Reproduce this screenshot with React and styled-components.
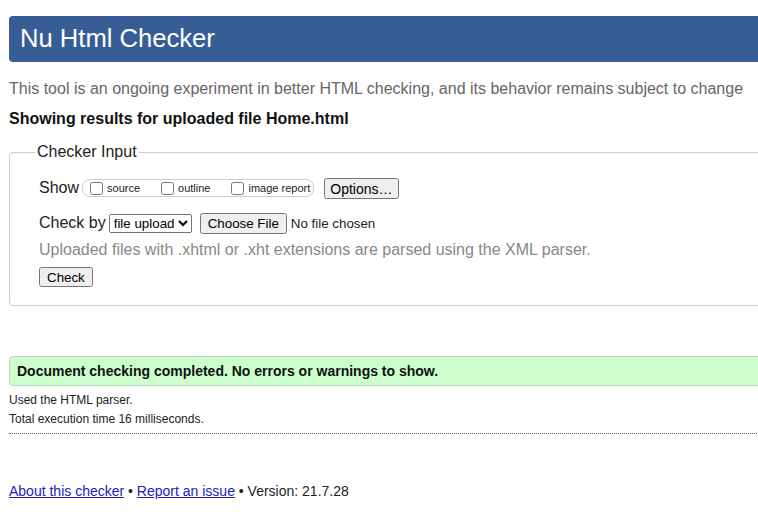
import React from "react";
import styled, { createGlobalStyle } from "styled-components";

const Global = createGlobalStyle`
  html, body { margin: 0; padding: 0; overflow: hidden; background: #fff; }
  body { font-family: "Liberation Sans", Arial, sans-serif; color: #111; }
`;

const Page = styled.div`
  width: 900px;
  padding: 16px 0 0 9px;
`;

const Header = styled.header`
  height: 46px;
  background: #365d95;
  border-radius: 4px;
  display: flex;
  align-items: center;
  padding: 0 11px;
`;

const Title = styled.h1`
  margin: 0;
  font-size: 25.6px;
  font-weight: normal;
  color: #fff;
  line-height: 1;
`;

const Intro = styled.p`
  margin: 18px 0 0;
  font-size: 16px;
  line-height: 18px;
  color: #666;
`;

const Showing = styled.p`
  margin: 12px 0 0;
  font-size: 16px;
  line-height: 18px;
  font-weight: bold;
  color: #111;
`;

const Fieldset = styled.fieldset`
  margin: 15px 0 0;
  padding: 0 0 18px 29px;
  border: 1px solid #ccc;
  border-radius: 4px;
  min-inline-size: auto;
`;

const Legend = styled.legend`
  margin-left: -4px;
  padding: 0 2px;
  font-size: 16px;
  line-height: 18px;
  color: #222;
`;

const Row = styled.div`
  display: flex;
  align-items: center;
  height: ${(p) => p.$h || 22}px;
  margin-top: ${(p) => p.$mt}px;
  font-size: 16px;
  color: #222;
`;

const Label = styled.span`
  margin-right: 3px;
`;

const Group = styled.span`
  display: inline-flex;
  align-items: center;
  height: 16px;
  border: 1px solid #ccc;
  border-radius: 8px;
  padding: 0 0 0 6px;
  margin-right: 10px;
`;

const Opt = styled.label`
  display: inline-flex;
  align-items: center;
  font-size: 11px;
  margin-right: ${(p) => p.$mr}px;
`;

const Box = styled.input`
  width: 13px;
  height: 13px;
  margin: 0 4px 0 1px;
`;

const Button = styled.button`
  font-family: "Liberation Sans", Arial, sans-serif;
  font-size: ${(p) => p.$fs || 13.33}px;
  height: ${(p) => p.$h || 21}px;
  padding: 1px ${(p) => p.$px || 6}px;
`;

const Select = styled.select`
  font-family: "Liberation Sans", Arial, sans-serif;
  font-size: 13.33px;
  height: 19px;
  margin-right: 8px;
`;

const FileInput = styled.input`
  font-family: "Liberation Sans", Arial, sans-serif;
  font-size: 13.33px;
`;

const Note = styled.div`
  margin-top: 7px;
  font-size: 16px;
  line-height: 18px;
  color: #888;
`;

const Success = styled.div`
  margin-top: 50px;
  height: 28px;
  display: flex;
  align-items: center;
  padding-left: 7px;
  background: #ccffcc;
  border: 1px solid #c3cfc3;
  border-radius: 4px;
  font-size: 14px;
  font-weight: bold;
  color: #111;
`;

const Details = styled.div`
  padding: 5px 0 4px;
  border-bottom: 1px dotted #666;
  font-size: 12px;
  line-height: 19px;
  color: #222;
`;

const Footer = styled.div`
  margin-top: 49px;
  font-size: 14px;
  color: #222;
`;

const Link = styled.a`
  color: #2020c0;
  text-decoration: underline;
`;

export default function App() {
  return (
    <>
      <Global />
      <Page>
        <Header>
          <Title>Nu Html Checker</Title>
        </Header>
        <Intro>
          This tool is an ongoing experiment in better HTML checking, and its behavior remains subject to change
        </Intro>
        <Showing>Showing results for uploaded file Home.html</Showing>
        <Fieldset>
          <Legend>Checker Input</Legend>
          <Row $mt={16}>
            <Label>Show</Label>
            <Group>
              <Opt $mr={20}>
                <Box type="checkbox" />
                source
              </Opt>
              <Opt $mr={20}>
                <Box type="checkbox" />
                outline
              </Opt>
              <Opt $mr={3}>
                <Box type="checkbox" />
                image report
              </Opt>
            </Group>
            <Button $fs={14} $h={21} $px={4}>Options…</Button>
          </Row>
          <Row $mt={13}>
            <Label>Check by</Label>
            <Select defaultValue="file">
              <option value="file">file upload</option>
            </Select>
            <FileInput type="file" />
          </Row>
          <Note>Uploaded files with .xhtml or .xht extensions are parsed using the XML parser.</Note>
          <Row $mt={8} $h={20}>
            <Button $h={20}>Check</Button>
          </Row>
        </Fieldset>
        <Success>Document checking completed. No errors or warnings to show.</Success>
        <Details>
          <div>Used the HTML parser.</div>
          <div>Total execution time 16 milliseconds.</div>
        </Details>
        <Footer>
          <Link href="#">About this checker</Link> • <Link href="#">Report an issue</Link> • Version: 21.7.28
        </Footer>
      </Page>
    </>
  );
}
